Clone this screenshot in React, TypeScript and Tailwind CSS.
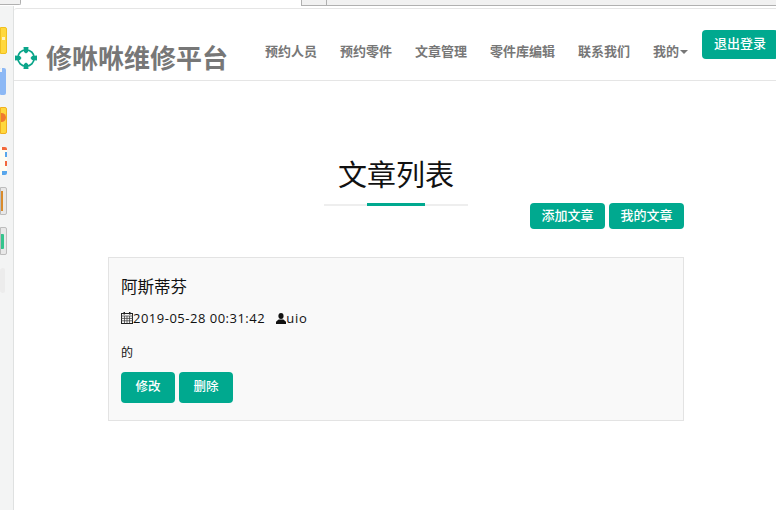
import type { ReactNode } from "react";

const cjk = "font-['Open_Sans','Noto_Sans_CJK_SC',sans-serif]";

const navItems = ["预约人员", "预约零件", "文章管理", "零件库编辑", "联系我们"];

const Logo = () => (
    <svg width="24" height="24" viewBox="0 0 24 24" className="-ml-px shrink-0">
        <circle cx="12" cy="12" r="8.2" fill="none" stroke="#0aa58a" strokeWidth="1.8" />
        <path d="M9.5 1h5L14 6l-2 1.5L10 6zM9.5 23h5L14 18l-2-1.5-2 1.5zM1 9.5v5L6 14l1.5-2L6 10zM23 9.5v5L18 14l-1.5-2 1.5-2z" fill="#0aa58a" />
    </svg>
);

const CalendarIcon = () => (
    <svg width="12" height="12" viewBox="0 0 12 12" className="shrink-0">
        <rect x="0.5" y="1.5" width="11" height="10" fill="none" stroke="#222" />
        <path d="M0 4h12M3.5 4v7M6 4v7M8.5 4v7M0 6.4h12M0 8.8h12" stroke="#444" strokeWidth="0.8" />
        <rect x="2.5" y="0" width="1.5" height="2.5" fill="#222" />
        <rect x="8" y="0" width="1.5" height="2.5" fill="#222" />
    </svg>
);

const UserIcon = () => (
    <svg width="10" height="11" viewBox="0 0 10 11" className="block shrink-0">
        <ellipse cx="5" cy="3" rx="2.6" ry="3" fill="#111" />
        <path d="M0 11V8.8L2.6 6.4h4.8L10 8.8V11z" fill="#111" />
    </svg>
);

const Btn = ({ children, className }: { children: ReactNode; className: string }) => (
    <button className={`flex items-center justify-center rounded-[4px] bg-[#00a98f] font-medium text-white ${className}`}>
        {children}
    </button>
);

const SideTile = ({ className, children }: { className: string; children?: ReactNode }) => (
    <div className={`relative overflow-hidden rounded-r-[2px] ${className}`}>{children}</div>
);

const Sidebar = () => (
    <aside className="flex w-[14px] shrink-0 flex-col items-start border-r border-[#dfe1e1] bg-[#f3f4f4] pt-[21px]">
        <SideTile className="h-[27px] w-[7px] border border-[#f0c020] bg-[#ffd83d]">
            <div className="absolute right-[1px] top-[9px] h-[3px] w-[3px] bg-[#fff3c0]" />
        </SideTile>
        <SideTile className="mt-[14px] h-[27px] w-[6px] rounded-[1px] bg-[#8cb8f5]">
            <div className="h-[4px] w-[2px] bg-[#f3f4f4]" />
        </SideTile>
        <SideTile className="mt-[12px] h-[27px] w-[7px] border border-[#f0b020] bg-[#ffd83d]">
            <div className="absolute left-0 top-[5px] h-[9px] w-[5px] rounded-r-full bg-[#f07a30]" />
        </SideTile>
        <SideTile className="mt-[13px] h-[28px] w-[7px] bg-[#fffdf2]">
            <div className="absolute right-0 top-0 h-[3px] w-[5px] bg-[#f2683c]" />
            <div className="absolute right-0 top-[5px] h-[5px] w-[2px] bg-[#58a6ec]" />
            <div className="absolute right-0 top-[14px] h-[5px] w-[2px] bg-[#f2683c]" />
            <div className="absolute right-0 bottom-0 h-[4px] w-[5px] bg-[#58a6ec]" />
        </SideTile>
        <SideTile className="mt-[12px] h-[28px] w-[7px] border border-[#bdbdbd] bg-[#e8e8e8]">
            <div className="absolute left-0 top-[3px] h-[20px] w-[2px] border-r-2 border-[#d98b2b]" />
        </SideTile>
        <SideTile className="mt-[12px] h-[28px] w-[7px] border border-[#bdbdbd] bg-[#e8e8e8]">
            <div className="absolute left-0 top-[6px] h-[15px] w-[3px] rounded-r-[1px] bg-[#34c48d]" />
        </SideTile>
        <SideTile className="mt-[13px] h-[25px] w-[5px] rounded-[3px] bg-[#ececec]" />
    </aside>
);

const Navbar = () => (
    <header className="flex h-[73px] items-start rounded-tl-[3px] border-y border-[#e5e5e5] bg-white pl-px">
        <div className="mt-[34px] flex items-center">
            <Logo />
            <h1 className="ml-[8px] text-[26px] leading-[30px] font-bold whitespace-nowrap text-[#777]">修咻咻维修平台</h1>
        </div>
        <nav className="ml-[37px] mt-[34px] flex items-center gap-[23px] text-[13px] leading-[16px] font-bold whitespace-nowrap text-[#777]">
            {navItems.map((item) => (
                <span key={item}>{item}</span>
            ))}
            <span className="flex items-center">
                我的
                <span className="ml-px mt-px h-0 w-0 border-x-[4px] border-t-[4px] border-x-transparent border-t-[#777]" />
            </span>
        </nav>
        <Btn className="ml-[14px] mt-[21px] h-[29px] w-[76px] shrink-0 pb-[2px] text-[13px]">退出登录</Btn>
    </header>
);

const App = () => (
    <div className={`h-[510px] w-[776px] overflow-hidden bg-white ${cjk}`}>
        <div className="flex h-[6px] items-start">
            <div className="h-[5px] w-[21px] rounded-br-[2px] border-r border-b border-[#b0b0b0] bg-[#f1f1f1]" />
            <div className="w-[280px]" />
            <div className="h-[6px] w-[26px] border-x border-b border-[#b0b0b0] bg-[#f1f1f1]" />
            <div className="h-[6px] flex-1 border-b border-[#b0b0b0] bg-[#f1f1f1]" />
        </div>
        <div className="flex h-[504px]">
            <Sidebar />
            <main className="min-w-0 flex-1 pt-[2px]">
                <Navbar />
                <div className="ml-[94px] w-[576px]">
                    <div className="mt-[72px] flex flex-col items-center">
                        <h2 className="text-[29px] leading-[44px] font-normal text-[#111]">文章列表</h2>
                        <div className="relative mt-[7px] h-[2px] w-[144px] bg-[#eeeeee]">
                            <div className="absolute left-[43px] -top-[1px] h-[3px] w-[58px] bg-[#00a98f]" />
                        </div>
                    </div>
                    <div className="-mt-[3px] flex justify-end gap-[4px]">
                        <Btn className="h-[26px] w-[75px] text-[13px]">添加文章</Btn>
                        <Btn className="h-[26px] w-[75px] text-[13px]">我的文章</Btn>
                    </div>
                    <section className="mt-[28px] h-[164px] border border-[#e3e3e3] bg-[#f9f9f9] pl-[12px] text-[#111]">
                        <h3 className="mt-[18px] text-[16.5px] leading-[22px] font-normal">阿斯蒂芬</h3>
                        <div className="mt-[11px] flex items-center text-[13px] leading-[18px] tracking-[0.5px]">
                            <CalendarIcon />
                            <span>2019-05-28 00:31:42</span>
                            <span className="ml-[11px]"><UserIcon /></span>
                            <span className="tracking-[0.8px]">uio</span>
                        </div>
                        <p className="mt-[17px] text-[12px] leading-[18px]">的</p>
                        <div className="mt-[10px] flex gap-[4px]">
                            <Btn className="h-[31px] w-[54px] pb-px text-[12.5px]">修改</Btn>
                            <Btn className="h-[31px] w-[54px] pb-px text-[12.5px]">删除</Btn>
                        </div>
                    </section>
                </div>
            </main>
        </div>
    </div>
);

export default App;
